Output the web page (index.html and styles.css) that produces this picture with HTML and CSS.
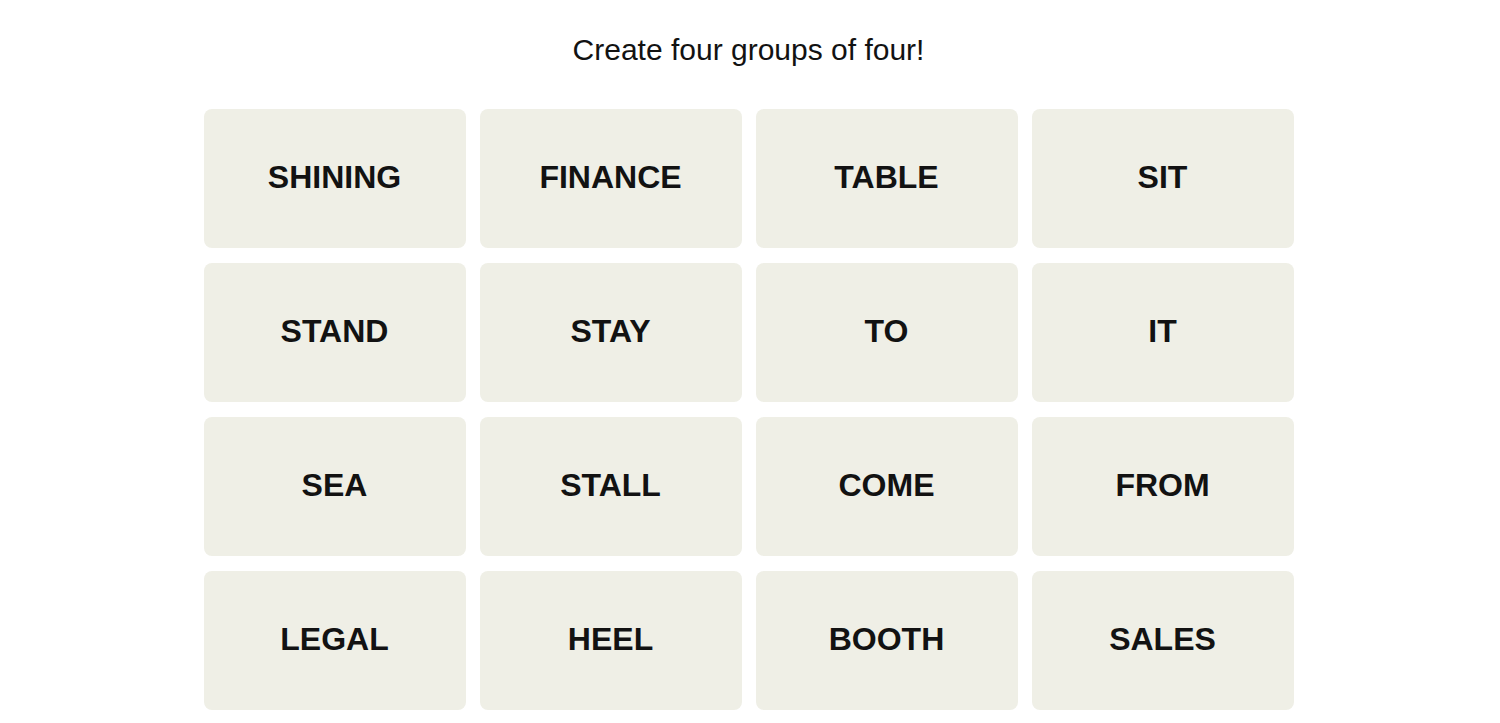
FILE: index.html
```html
<!DOCTYPE html>
<html lang="en">
<head>
  <meta charset="UTF-8" />
  <meta name="viewport" content="width=device-width, initial-scale=1.0"/>
  <title>Connections</title>
  <link rel="stylesheet" href="styles.css">
</head>
<body>
  <div class="game">
    <h2 class="prompt">Create four groups of four!</h2>
    <div class="board">
      <button class="tile">SHINING</button>
      <button class="tile">FINANCE</button>
      <button class="tile">TABLE</button>
      <button class="tile">SIT</button>
      <button class="tile">STAND</button>
      <button class="tile">STAY</button>
      <button class="tile">TO</button>
      <button class="tile">IT</button>
      <button class="tile">SEA</button>
      <button class="tile">STALL</button>
      <button class="tile">COME</button>
      <button class="tile">FROM</button>
      <button class="tile">LEGAL</button>
      <button class="tile">HEEL</button>
      <button class="tile">BOOTH</button>
      <button class="tile">SALES</button>
    </div>
  </div>
</body>
</html>
```

FILE: styles.css
```css
body {
  margin: 0;
  font-family: "Liberation Sans", Arial, sans-serif;
  background: #ffffff;
  color: #121212;
}
.game {
  display: flex;
  flex-direction: column;
  align-items: center;
  padding: 32px 3px 0 0;
}
.prompt {
  margin: 0 0 41px;
  font-size: 30px;
  line-height: 36px;
  font-weight: normal;
}
.board {
  display: grid;
  grid-template-columns: repeat(4, 262px);
  grid-auto-rows: 139px;
  column-gap: 14px;
  row-gap: 15px;
}
.tile {
  display: flex;
  align-items: center;
  justify-content: center;
  padding: 0 0 3px;
  background: #efefe6;
  border: none;
  border-radius: 8px;
  font-family: "Liberation Sans", Arial, sans-serif;
  font-size: 32px;
  font-weight: bold;
  color: #121212;
  cursor: pointer;
}
```
